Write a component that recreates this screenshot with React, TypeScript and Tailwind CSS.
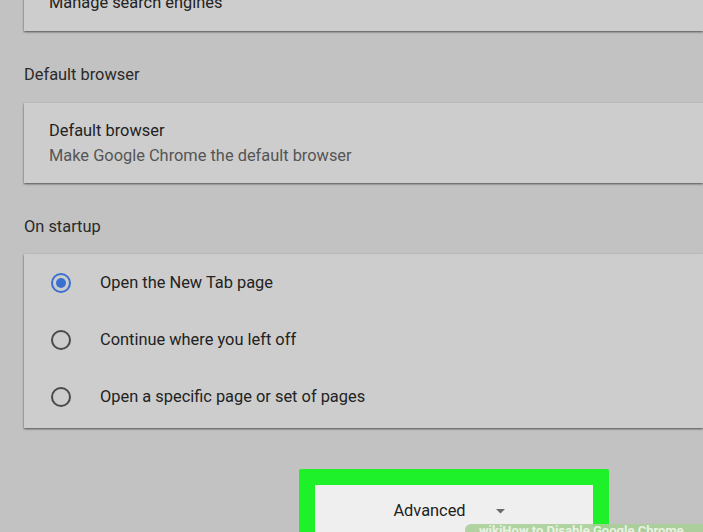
import React from "react";

function Radio({ checked }: { checked?: boolean }) {
  return (
    <span
      className={
        "flex h-[20px] w-[20px] items-center justify-center rounded-full border-2 " +
        (checked ? "border-[#3b6fcf]" : "border-[#4a4a4a]")
      }
    >
      {checked && <span className="block h-[10px] w-[10px] rounded-full bg-[#3b6fcf]" />}
    </span>
  );
}

export default function App() {
  const font = { fontFamily: "Roboto, 'Noto Sans', sans-serif" };
  const options = [
    { label: "Open the New Tab page", checked: true },
    { label: "Continue where you left off" },
    { label: "Open a specific page or set of pages" },
  ];
  return (
    <div
      className="relative h-[532px] w-[703px] overflow-hidden bg-[#c2c2c2] pl-[24px] text-[16.4px] text-[#222]"
      style={font}
    >
      <div className="-mt-[21px] flex h-[52px] items-start bg-[#cdcdcd] pl-[25px] pt-[12px] shadow-[0_1px_2px_rgba(0,0,0,0.6)]">
        <span className="leading-[24px]">Manage search engines</span>
      </div>

      <div className="pb-[16px] pt-[32px] leading-[24px] text-[#2a2a2a]">Default browser</div>

      <div className="flex flex-col bg-[#cdcdcd] pb-[15px] pl-[25px] pt-[16px] shadow-[0_1px_2px_rgba(0,0,0,0.6)]">
        <span className="leading-[24px]">Default browser</span>
        <span className="mt-[1px] leading-[24px] text-[#555]">Make Google Chrome the default browser</span>
      </div>

      <div className="pb-[15px] pt-[32px] leading-[24px] text-[#2a2a2a]">On startup</div>

      <div className="flex flex-col bg-[#cdcdcd] pb-[3px] shadow-[0_1px_2px_rgba(0,0,0,0.6)]">
        {options.map((o) => (
          <div key={o.label} className="flex h-[57px] items-center pl-[27px]">
            <Radio checked={o.checked} />
            <span className="ml-[29px] leading-[24px]">{o.label}</span>
          </div>
        ))}
      </div>

      <div className="ml-[275px] mt-[41px] w-[310px] rounded-[2px] bg-[#1ef02a] px-[16px] pt-[16px]">
        <div className="flex h-[60px] items-start justify-center gap-[30px] bg-[#efefef] pr-[10px] pt-[14px]">
          <span className="leading-[24px] text-[#222]">Advanced</span>
          <svg width="9" height="5" viewBox="0 0 9 5" className="mt-[10px]">
            <path d="M0 0 L9 0 L4.5 4.5 Z" fill="#6a6a6a" />
          </svg>
        </div>
      </div>

      <div className="absolute bottom-[-10px] left-[465px] flex h-[18px] w-[260px] items-start rounded-tl-[6px] bg-[#a9cf98]/90 pl-[14px] text-[13px] font-bold leading-[14px] text-[#e8f3e2]">
        wikiHow to Disable Google Chrome
      </div>
    </div>
  );
}
